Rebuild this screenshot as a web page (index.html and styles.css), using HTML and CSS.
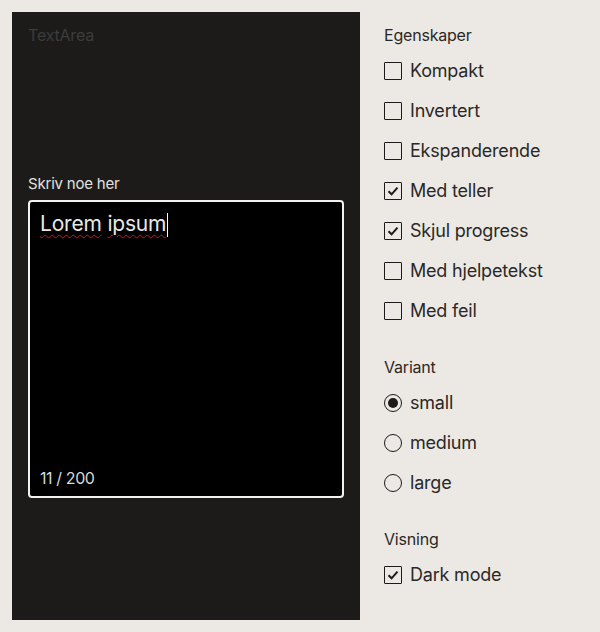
FILE: index.html
```html
<!DOCTYPE html>
<html lang="no">
<head>
<meta charset="utf-8">
<link rel="stylesheet" href="styles.css">
</head>
<body>
<div class="page">
  <section class="preview">
    <div class="preview-title">TextArea</div>
    <div class="field">
      <div class="field-label">Skriv noe her</div>
      <div class="textarea">
        <div class="value"><span class="spell">Lorem</span> <span class="spell">ipsum</span><span class="caret"></span></div>
        <div class="counter">11 / 200</div>
      </div>
    </div>
  </section>
  <div class="controls">
    <div class="group">
      <div class="group-title">Egenskaper</div>
      <div class="opt"><span class="box"></span>Kompakt</div>
      <div class="opt"><span class="box"></span>Invertert</div>
      <div class="opt"><span class="box"></span>Ekspanderende</div>
      <div class="opt"><span class="box"><svg viewBox="0 0 18 18" width="18" height="18"><path d="M4.5 9.2 L7.6 12.3 L13.5 5.6" fill="none" stroke="#1c1b1a" stroke-width="2"/></svg></span>Med teller</div>
      <div class="opt"><span class="box"><svg viewBox="0 0 18 18" width="18" height="18"><path d="M4.5 9.2 L7.6 12.3 L13.5 5.6" fill="none" stroke="#1c1b1a" stroke-width="2"/></svg></span>Skjul progress</div>
      <div class="opt"><span class="box"></span>Med hjelpetekst</div>
      <div class="opt"><span class="box"></span>Med feil</div>
    </div>
    <div class="group">
      <div class="group-title">Variant</div>
      <div class="opt"><span class="radio on"></span>small</div>
      <div class="opt"><span class="radio"></span>medium</div>
      <div class="opt"><span class="radio"></span>large</div>
    </div>
    <div class="group">
      <div class="group-title">Visning</div>
      <div class="opt"><span class="box"><svg viewBox="0 0 18 18" width="18" height="18"><path d="M4.5 9.2 L7.6 12.3 L13.5 5.6" fill="none" stroke="#1c1b1a" stroke-width="2"/></svg></span>Dark mode</div>
    </div>
  </div>
</div>
</body>
</html>
```

FILE: styles.css
```css
html, body {
  margin: 0;
  padding: 0;
  background: #ece8e4;
}
body {
  font-family: "Inter", "Liberation Sans", sans-serif;
  color: #2a2826;
}
.page {
  display: flex;
  gap: 24px;
  padding: 12px;
  height: 608px;
}
.preview {
  width: 348px;
  box-sizing: border-box;
  background: #1c1b1a;
  padding: 13px 16px;
  display: flex;
  flex-direction: column;
}
.preview-title {
  font-size: 16px;
  line-height: 20px;
  color: #3d3c3a;
  letter-spacing: -0.2px;
}
.field {
  margin-top: 129px;
  display: flex;
  flex-direction: column;
}
.field-label {
  font-size: 15px;
  line-height: 20px;
  color: #e2e1df;
  margin-bottom: 6px;
  letter-spacing: -0.2px;
}
.textarea {
  box-sizing: border-box;
  height: 298px;
  background: #000;
  border: 2px solid #f2f2f2;
  border-radius: 4px;
  padding: 8px 10px 8px;
  display: flex;
  flex-direction: column;
  justify-content: space-between;
}
.value {
  font-size: 21px;
  line-height: 28px;
  color: #e8e8e8;
  letter-spacing: -0.2px;
  white-space: pre;
}
.spell {
  text-decoration: underline wavy #d0101a;
  text-decoration-thickness: 1px;
  text-underline-offset: 3px;
}
.caret {
  display: inline-block;
  width: 1px;
  height: 24px;
  background: #fff;
  margin-left: 1px;
  vertical-align: -6px;
}
.counter {
  font-size: 16px;
  line-height: 20px;
  color: #d8d8d8;
  letter-spacing: -0.4px;
}
.controls {
  padding-top: 13px;
  display: flex;
  flex-direction: column;
  gap: 34px;
}
.group {
  display: flex;
  flex-direction: column;
  gap: 16px;
}
.group-title {
  font-size: 16px;
  line-height: 20px;
  margin-bottom: -2px;
  letter-spacing: -0.2px;
}
.opt {
  display: flex;
  align-items: center;
  gap: 8px;
  font-size: 18px;
  line-height: 24px;
  letter-spacing: -0.2px;
  height: 24px;
}
.box {
  box-sizing: border-box;
  width: 18px;
  height: 18px;
  border: 1.5px solid #1c1b1a;
  border-radius: 1px;
  position: relative;
  flex: none;
}
.box svg {
  position: absolute;
  left: -1.5px;
  top: -1.5px;
}
.radio {
  box-sizing: border-box;
  width: 18px;
  height: 18px;
  border: 1.5px solid #1c1b1a;
  border-radius: 50%;
  flex: none;
  display: flex;
  align-items: center;
  justify-content: center;
}
.radio.on::after {
  content: "";
  width: 10px;
  height: 10px;
  border-radius: 50%;
  background: #1c1b1a;
}
```
